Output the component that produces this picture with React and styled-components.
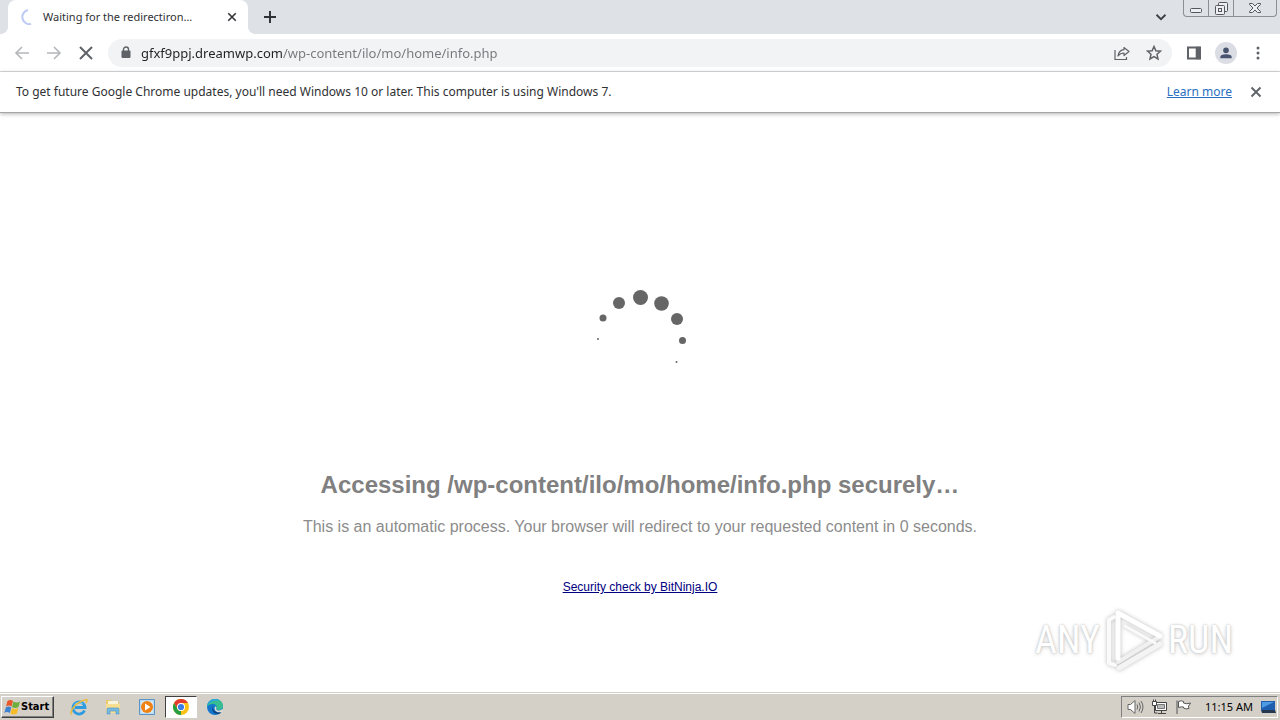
import React from 'react'
import styled, { createGlobalStyle } from 'styled-components';

const GlobalStyle = createGlobalStyle`
    * {
        box-sizing: border-box;
    }
    body {
        margin: 0;
        background: #fff;
        font-family: "Noto Sans", Tahoma, sans-serif;
        color: #303134;
    }
    button {
        padding: 0;
        border: 0;
        background: none;
        font: inherit;
        color: inherit;
    }
    svg {
        display: block;
        flex: none;
    }
`

const Screen = styled.div`
    display: flex;
    flex-direction: column;
    min-height: 100vh;
`

const TabStrip = styled.header`
    display: flex;
    align-items: flex-start;
    height: 34px;
    padding: 0 3px 0 8px;
    background: #dee1e6;
`

const Tab = styled.div`
    position: relative;
    display: flex;
    align-items: center;
    width: 240px;
    height: 34px;
    padding: 0 8px 0 12px;
    border-radius: 8px 8px 0 0;
    background: #fff;
    &::before, &::after {
        content: "";
        position: absolute;
        bottom: 0;
        width: 8px;
        height: 8px;
    }
    &::before {
        right: 100%;
        background: radial-gradient(circle at 0 0, transparent 8px, #fff 8px);
    }
    &::after {
        left: 100%;
        background: radial-gradient(circle at 100% 0, transparent 8px, #fff 8px);
    }
`

const TabTitle = styled.span`
    flex: 1;
    margin-left: 7px;
    font-size: 11px;
    line-height: 16px;
    white-space: nowrap;
`

const IconButton = styled.button`
    display: flex;
    align-items: center;
    justify-content: center;
    width: ${props => props.$width || 32}px;
    height: ${props => props.$height || 32}px;
    color: ${props => props.$color || '#5f6368'};
`

const Spacer = styled.div`
    flex: 1;
`

const WindowControls = styled.div`
    display: flex;
    height: 17px;
    margin-left: 6px;
    border: 1px solid #8b8e93;
    border-top: 0;
    border-radius: 0 0 4px 4px;
    ${IconButton} + ${IconButton} {
        border-left: 1px solid #8b8e93;
    }
`

const Toolbar = styled.nav`
    display: flex;
    align-items: center;
    height: 38px;
    padding: 0 6px;
    border-bottom: 1px solid #dadce0;
`

const AddressBar = styled.form`
    display: flex;
    flex: 1;
    align-items: center;
    height: 28px;
    margin: 0 6px;
    padding: 0 2px 0 12px;
    border-radius: 14px;
    background: #f1f3f4;
`

// the host part of the address is darker than its path
const AddressInput = styled.input`
    flex: 1;
    min-width: 0;
    height: 24px;
    margin-left: 9px;
    padding: 0;
    border: 0;
    outline: 0;
    background: linear-gradient(90deg, #202124 141px, #74787d 141px);
    background-clip: text;
    color: transparent;
    font-family: inherit;
    font-size: 13px;
`

const Avatar = styled.span`
    display: flex;
    align-items: center;
    justify-content: center;
    width: 22px;
    height: 22px;
    border-radius: 50%;
    background: #dadde3;
`

const InfoBar = styled.div`
    position: relative;
    display: flex;
    align-items: center;
    height: 41px;
    padding: 0 8px 0 16px;
    border-bottom: 1px solid #a6a6a6;
    box-shadow: 0 1px 4px rgba(0, 0, 0, 0.3);
    background: #fff;
    font-size: 12px;
    line-height: 16px;
`

const InfoLink = styled.a`
    margin-left: auto;
    margin-right: 8px;
    color: #2b6fc2;
`

const Page = styled.main`
    position: relative;
    display: flex;
    flex: 1;
    flex-direction: column;
    align-items: center;
    padding: 177px 16px 16px;
    font-family: "Liberation Sans", Arial, sans-serif;
    color: #808080;
    text-align: center;
`

const Title = styled.h1`
    margin: 81px 0 0;
    font-size: 24px;
    line-height: 28px;
`

const Message = styled.p`
    margin: 18px 0 0;
    font-size: 16px;
    line-height: 20px;
    color: #8c8c8c;
`

const CheckLink = styled.a`
    margin-top: 42px;
    font-size: 12px;
    line-height: 16px;
    color: #000080;
`

const Watermark = styled.div`
    position: absolute;
    right: 47px;
    bottom: 20px;
    display: flex;
    align-items: center;
    gap: 4px;
    font-family: "Roboto Condensed", "Liberation Sans", sans-serif;
    font-size: 38px;
    line-height: 64px;
    color: #fff;
    text-shadow: 0 0 2px #bbb, 0 1px 4px #ccc;
`

const Taskbar = styled.footer`
    display: flex;
    align-items: center;
    height: 28px;
    padding: 2px 2px 2px 1px;
    border-top: 1px solid #d4d0c8;
    box-shadow: inset 0 1px 0 #fff;
    background: #d4d0c8;
    font-size: 11px;
    color: #000;
`

const StartButton = styled.button`
    display: flex;
    align-items: center;
    width: 53px;
    height: 22px;
    margin-right: 9px;
    padding: 0 2px;
    border: 1px solid;
    border-color: #fff #404040 #404040 #fff;
    box-shadow: inset -1px -1px 0 #808080;
    font-family: "DejaVu Sans Condensed", "Noto Sans", sans-serif;
    font-size: 11px;
    font-weight: bold;
`

const TaskButton = styled.button`
    display: flex;
    align-items: center;
    justify-content: center;
    width: 32px;
    height: 22px;
    margin-right: 2px;
    border: 1px solid;
    border-color: ${props => props.$active ? '#404040 #fff #fff #404040' : 'transparent'};
    background: ${props => props.$active ? '#fff' : 'none'};
`

const Tray = styled.div`
    display: flex;
    align-items: center;
    height: 22px;
    gap: 7px;
    padding: 0 1px 0 5px;
    border: 1px solid;
    border-color: #808080 #fff #fff #808080;
`

const Clock = styled.time`
    margin-left: 6px;
    line-height: 16px;
`

const Icon = ({ size = 16, width, height, box, children, ...rest }) => (
    <svg width={width || size} height={height || size} viewBox={box || '0 0 16 16'} fill="none"
        stroke="currentColor" strokeWidth="1.6" aria-hidden="true" {...rest}>
        {children}
    </svg>
)

const CloseIcon = ({ size }) => <Icon size={size}><path d="M2 2l12 12M14 2L2 14" strokeWidth={size > 12 ? 2 : 2.5} /></Icon>

const DOTS = [
    [8, 49, 1],
    [13, 28, 3.5],
    [29, 13, 6],
    [50.5, 7.5, 7.5],
    [71.5, 13.5, 7.3],
    [87, 29, 6],
    [92.5, 50.5, 3.5],
    [86.5, 72, 1],
]

const Loader = () => (
    <svg width="100" height="100" viewBox="0 0 100 100" fill="#666" role="img" aria-label="Loading">
        {DOTS.map(([x, y, r]) => <circle key={x} cx={x} cy={y} r={r} />)}
    </svg>
)

const LogoSvg = styled.svg`
    overflow: visible;
    filter: drop-shadow(0 0 2px #bbb);
`

const PlayLogo = () => (
    <LogoSvg width="60" height="64" viewBox="0 0 60 64" fill="none" strokeLinejoin="round" strokeLinecap="round" aria-hidden="true">
        <path d="M10 9L5 12v43l6 2" stroke="#fafafa" strokeWidth="4" />
        <path d="M15 60L56 36" stroke="#f4f4f4" strokeWidth="5" />
        <path d="M14 54L55 29" stroke="#f0f0f0" strokeWidth="4" />
        <path d="M14 50V5l42 23" stroke="#fff" strokeWidth="5" />
        <path d="M21 18l30 17" stroke="#fafafa" strokeWidth="3" />
    </LogoSvg>
)

const WindowsFlag = () => (
    <svg width="17" height="16" viewBox="0 0 17 16" aria-hidden="true">
        <path d="M3.500 2q3-2 5.500 0L7.500 7.500q-3-2-5.500 0z" fill="#e8562a" />
        <path d="M9.500 2.500q3 2 6.500 0L14.500 8q-3.500 2-6.500 0z" fill="#6fae3c" />
        <path d="M1.800 8.500q3-2 5.500 0L5.800 14q-3-2-5.500 0z" fill="#3e83cf" />
        <path d="M7.900 9q3 2 6.500 0l-1.500 5.500q-3.500 2-6.500 0z" fill="#f6bd28" />
    </svg>
)

const ExplorerIcon = () => (
    <svg width="18" height="18" viewBox="0 0 18 18" fill="none" aria-hidden="true">
        <path d="M14.500 12.500A6 6 0 1 1 15 9.500H5" stroke="#2d9be0" strokeWidth="2.800" />
        <path d="M4.500 7.500a5 5 0 0 1 8-1.500" stroke="#8bd2f6" strokeWidth="1.200" />
        <path d="M2 16.500C-1 14 5 4 16.500 1.500c1 .5.500 2-.5 3.500" stroke="#e8bb3c" strokeWidth="1.500" />
    </svg>
)

const FolderIcon = () => (
    <svg width="18" height="18" viewBox="0 0 18 18" aria-hidden="true">
        <path d="M2 2h5l1 2h7v11H2z" fill="#e9c968" />
        <path d="M4 3h10v5H4z" fill="#f8f5dc" />
        <path d="M2 6h14v9H2z" fill="#f6df91" />
        <path d="M3 16v-5q0-1 1-1h10q1 0 1 1v5h-3v-3H6v3z" fill="#77b9e3" stroke="#4c92c4" strokeWidth=".6" />
    </svg>
)

const MediaIcon = () => (
    <svg width="18" height="18" viewBox="0 0 18 18" aria-hidden="true">
        <path d="M1.500 1.500h15v15h-15z" fill="#b9dcf4" stroke="#5a94c6" />
        <path d="M3.500 3.500h11v11h-11z" fill="#e4f2fb" />
        <circle cx="9" cy="9" r="6" fill="#ef8213" />
        <path d="M7 5.500v7L12.500 9z" fill="#fff" />
    </svg>
)

const ChromeIcon = () => (
    <svg width="16" height="16" viewBox="0 0 16 16" aria-hidden="true">
        <circle cx="8" cy="8" r="8" fill="#fbc116" />
        <path d="M8 8L4.600 10 1.070 4A8 8 0 0 1 14.930 4H8z" fill="#e33b2e" />
        <path d="M1.070 4L4.540 10A4 4 0 0 0 8 12L8 16A8 8 0 0 1 1.070 4z" fill="#269f42" />
        <path d="M11.500 10L8 16v-4z" fill="#fbc116" />
        <circle cx="8" cy="8" r="4" fill="#fff" />
        <circle cx="8" cy="8" r="3.100" fill="#3c7de6" />
    </svg>
)

const EdgeIcon = () => (
    <svg width="16" height="16" viewBox="0 0 16 16" aria-hidden="true">
        <circle cx="8" cy="8" r="8" fill="#1277cc" />
        <path d="M0 8C0 3 4 0 8 0c5 0 8 3.500 8 7 0 3-2.500 4-4.500 4-2 0-2.500-1-2-2C10 7 8.500 5 6 5 3 5 .500 6.500 0 8z" fill="#36bd92" />
        <path d="M0 8C0 3 4 0 8 0c2 0 3.500.500 5 1.800C9 .800 2 2 0 8z" fill="#2aa5df" />
        <path d="M6.300 7C5 10 7.500 14 13.500 12.700 15 12.300 14 14 12 15 6 16 3.500 10 6.300 7z" fill="#0b4787" />
        <path d="M8 7.500c1.500 0 1.500 1.500 1.200 2.300C9 11 11 12 13 11.300l3-1.300c.500.300 0 1.500-.8 2.700-4 2-9.200-.700-7.200-5.200z" fill="#dcdcd4" />
    </svg>
)

const App = () => (
    <Screen>
        <GlobalStyle />
        <TabStrip>
            <Tab>
                <Icon stroke="#bccaf5" strokeWidth="2"><path d="M8 1A7 7 0 0 0 11 15" /></Icon>
                <TabTitle>Waiting for the redirectiron…</TabTitle>
                <IconButton $width={16} $height={16} $color="#303236" aria-label="Close tab"><CloseIcon size={10} /></IconButton>
            </Tab>
            <IconButton $width={44} $height={34} $color="#303236" aria-label="New tab">
                <Icon size={12} strokeWidth="2.600"><path d="M8 0v16M0 8h16" /></Icon>
            </IconButton>
            <Spacer />
            <IconButton $width={32} $height={34} $color="#3c4043" aria-label="Search tabs">
                <Icon size={12} strokeWidth="2.400"><path d="M2 5l6 6 6-6" /></Icon>
            </IconButton>
            <WindowControls>
                <IconButton $width={24} $height={16} $color="#54575c" aria-label="Minimize">
                    <Icon width="12" height="9" box="0 0 12 9" strokeWidth="1"><rect x=".5" y="4.500" width="11" height="4" rx="1" fill="#eceef1" /></Icon>
                </IconButton>
                <IconButton $width={25} $height={16} $color="#54575c" aria-label="Restore">
                    <Icon size={13} box="0 0 13 13" strokeWidth="1">
                        <path d="M3.500 3.500v-2q0-1 1-1h7q1 0 1 1v7q0 1-1 1h-2" fill="#eceef1" />
                        <rect x=".5" y="3.500" width="9" height="9" rx="1" fill="#eceef1" />
                        <rect x="3.500" y="6.500" width="3" height="3" />
                    </Icon>
                </IconButton>
                <IconButton $width={43} $height={16} $color="#54575c" aria-label="Close">
                    <Icon width="12" height="10" box="0 0 12 10" strokeWidth="1">
                        <path d="M.500.500h3L6 3 8.500.500h3v1L8 5l3.500 3.500v1h-3L6 7 3.500 9.500h-3v-1L4 5 .500 1.500z" fill="#eceef1" />
                    </Icon>
                </IconButton>
            </WindowControls>
        </TabStrip>
        <Toolbar>
            <IconButton $color="#b5b7ba" aria-label="Back"><Icon><path d="M15 8H2M8 2L2 8l6 6" /></Icon></IconButton>
            <IconButton $color="#b5b7ba" aria-label="Forward"><Icon><path d="M1 8h13M8 2l6 6-6 6" /></Icon></IconButton>
            <IconButton aria-label="Stop"><CloseIcon size={16} /></IconButton>
            <AddressBar onSubmit={e => e.preventDefault()}>
                <Icon width="12" height="14" box="0 0 12 14" color="#5f6368">
                    <path d="M3.500 6V3.500a2.500 2.500 0 0 1 5 0V6" strokeWidth="1.400" />
                    <rect x="1.500" y="4.500" width="9" height="7.500" rx="1" fill="currentColor" stroke="none" />
                </Icon>
                <AddressInput aria-label="Address" defaultValue="gfxf9ppj.dreamwp.com/wp-content/ilo/mo/home/info.php" spellCheck={false} />
                <IconButton type="button" aria-label="Share">
                    <Icon strokeWidth="1.200">
                        <path d="M1 5v9.500h11.500v-2.500" />
                        <path d="M10 2.500L15 6.500l-5 4V8C7.500 8 5.500 9 4 11c.500-3.500 2.500-6 6-6.300z" strokeLinejoin="round" />
                    </Icon>
                </IconButton>
                <IconButton type="button" aria-label="Bookmark">
                    <Icon strokeWidth="1.500"><path d="M8 1.500l1.900 4.300 4.600.4-3.500 3.100 1 4.600L8 11.500l-4 2.400 1-4.600L1.500 6.200l4.600-.4z" /></Icon>
                </IconButton>
            </AddressBar>
            <IconButton aria-label="Side panel">
                <Icon><path d="M2 2.500h12v11H2z" strokeWidth="2" /><path d="M10.500 2.500H14v11h-3.500z" fill="currentColor" /></Icon>
            </IconButton>
            <IconButton $color="#47536f" aria-label="Profile">
                <Avatar>
                    <Icon size={14} stroke="none"><circle cx="8" cy="5" r="3.200" fill="currentColor" /><path d="M1.500 14v-1.500q0-3.200 6.500-3.200t6.500 3.200V14z" fill="currentColor" /></Icon>
                </Avatar>
            </IconButton>
            <IconButton aria-label="Menu">
                <Icon stroke="none"><circle cx="8" cy="3" r="1.500" fill="currentColor" /><circle cx="8" cy="8" r="1.500" fill="currentColor" /><circle cx="8" cy="13" r="1.500" fill="currentColor" /></Icon>
            </IconButton>
        </Toolbar>
        <InfoBar>
            <span>To get future Google Chrome updates, you'll need Windows 10 or later. This computer is using Windows 7.</span>
            <InfoLink href="#learn">Learn more</InfoLink>
            <IconButton aria-label="Dismiss"><CloseIcon size={12} /></IconButton>
        </InfoBar>
        <Page>
            <Loader />
            <Title>Accessing /wp-content/ilo/mo/home/info.php securely…</Title>
            <Message>This is an automatic process. Your browser will redirect to your requested content in 0 seconds.</Message>
            <CheckLink href="#check">Security check by BitNinja.IO</CheckLink>
            <Watermark>
                <span>ANY</span>
                <PlayLogo />
                <span>RUN</span>
            </Watermark>
        </Page>
        <Taskbar>
            <StartButton><WindowsFlag />Start</StartButton>
            <TaskButton aria-label="Internet Explorer"><ExplorerIcon /></TaskButton>
            <TaskButton aria-label="Windows Explorer"><FolderIcon /></TaskButton>
            <TaskButton aria-label="Media Player"><MediaIcon /></TaskButton>
            <TaskButton $active aria-label="Chrome"><ChromeIcon /></TaskButton>
            <TaskButton aria-label="Edge"><EdgeIcon /></TaskButton>
            <Spacer />
            <Tray>
                <Icon width="17" box="0 0 17 16" stroke="#666" strokeWidth="1">
                    <path d="M1 5.500h2.500L8 1.500v13l-4.500-4H1z" fill="#fff" />
                    <path d="M10 5.500q1.500 2.500 0 5M12 3.500q3 4.500 0 9M14 2q4 6 0 12" />
                </Icon>
                <Icon width="17" box="0 0 17 16" stroke="#444" strokeWidth="1">
                    <path d="M4.500 3.500h11v8h-11z" fill="#fff" />
                    <path d="M6.500 5.500h7v4h-7z" fill="#bbb" stroke="#777" />
                    <path d="M7 14.500h8M10.500 12v2M3.500 7v7h3" />
                    <path d="M1.500 2.500h4v4h-4zM2.500.500v2M4.500.500v2" fill="#fff" />
                </Icon>
                <Icon width="17" box="0 0 17 16" stroke="#555" strokeWidth="1">
                    <path d="M2 1.500V15" />
                    <path d="M3.500 2.500q3-1.500 5 0v1.500q3 1.500 7 0-1 2-2 3 0 1 .5 2.500-3 1-5.500-.5V8q-2-.500-5 .5z" fill="#fff" />
                </Icon>
                <Clock>11:15 AM</Clock>
                <Icon size={16} stroke="none">
                    <path d="M1 2h14v9H1z" fill="#1d5fae" />
                    <path d="M2 3h12L2 9z" fill="#4c9be3" />
                    <path d="M1 11h14l1 3H2z" fill="#26384f" />
                </Icon>
            </Tray>
        </Taskbar>
    </Screen>
)

export default App
